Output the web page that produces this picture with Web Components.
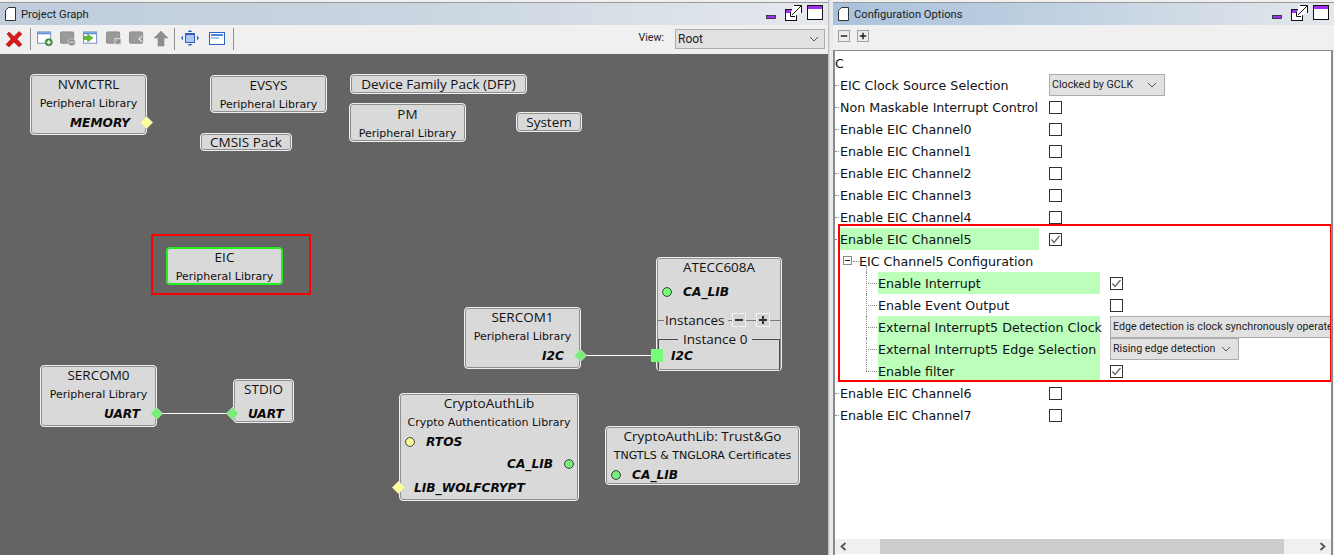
<!DOCTYPE html>
<html><head><meta charset="utf-8"><title>Project Graph</title>
<style>
html,body{margin:0;padding:0;width:1334px;height:555px;overflow:hidden;background:#f0f0f0;}
body{font-family:"Roboto","Liberation Sans",sans-serif;}
app-shell{--ui:"Roboto","Liberation Sans",sans-serif;--title:"Open Sans","Liberation Sans",sans-serif;--tree:"DejaVu Sans","Liberation Sans",sans-serif;}
</style></head><body>
<app-shell>
  <dock-panel slot="left" caption="Project Graph" grad="#bfcddb,#c9d5e0 50%,#e6e9ee">
    <tool-bar slot="tools" style="height:29px;padding-bottom:2px">
      <ui-icon name="close" style="margin-left:5px;width:18px;height:18px"></ui-icon>
      <tb-sep style="margin-left:7px"></tb-sep>
      <ui-icon name="add" style="margin-left:6px"></ui-icon>
      <ui-icon name="remove" style="margin-left:7px"></ui-icon>
      <ui-icon name="enter" style="margin-left:7px"></ui-icon>
      <ui-icon name="check" style="margin-left:7px"></ui-icon>
      <ui-icon name="back" style="margin-left:7px"></ui-icon>
      <ui-icon name="up" style="margin-left:8px"></ui-icon>
      <tb-sep style="margin-left:5px"></tb-sep>
      <ui-icon name="fit" style="margin-left:6px;width:18px"></ui-icon>
      <ui-icon name="win" style="margin-left:10px"></ui-icon>
      <tb-sep style="margin-left:8px"></tb-sep>
      <view-combo style="margin-left:auto"></view-combo>
    </tool-bar>
    <graph-canvas>
      <svg slot="wires" width="828" height="501" viewBox="0 54 828 501" style="position:absolute;left:0;top:0">
        <path d="M157 413.5H233M581 355.5H652" stroke="#fff" stroke-width="1" fill="none"/>
      </svg>
      <graph-node x="30" y="74" w="117" h="61" caption="NVMCTRL" sub="Peripheral Library">
        <graph-port side="right" place="edge" shape="diamond" color="#ffff99">MEMORY</graph-port>
      </graph-node>
      <graph-node x="210" y="75" w="117" h="38" caption="EVSYS" sub="Peripheral Library"></graph-node>
      <graph-node x="350" y="74" w="177" h="20" caption="Device Family Pack (DFP)" single></graph-node>
      <graph-node x="349" y="103" w="117" h="39" caption="PM" sub="Peripheral Library" style="padding-top:1px"></graph-node>
      <graph-node x="200" y="133" w="92" h="18" caption="CMSIS Pack" single></graph-node>
      <graph-node x="516" y="112" w="66" h="20" caption="System" single></graph-node>
      <graph-node x="166" y="247" w="117" h="38" caption="EIC" sub="Peripheral Library" selected></graph-node>
      <graph-node x="464" y="307" w="117" h="62" caption="SERCOM1" sub="Peripheral Library">
        <graph-port side="right" place="edge" shape="diamond" color="#77ee77">I2C</graph-port>
      </graph-node>
      <graph-node x="656" y="257" w="126" h="114" caption="ATECC608A">
        <graph-port side="left" place="inset" shape="circle" color="#77ff77" style="margin-top:5px">CA_LIB</graph-port>
        <instance-row style="margin-top:9px"></instance-row>
        <instance-frame caption="Instance 0" style="margin-top:9px">
          <graph-port side="left" place="square" shape="square" color="#77ff77">I2C</graph-port>
        </instance-frame>
      </graph-node>
      <graph-node x="40" y="365" w="117" h="62" caption="SERCOM0" sub="Peripheral Library">
        <graph-port side="right" place="edge" shape="diamond" color="#77ee77">UART</graph-port>
      </graph-node>
      <graph-node x="233" y="379" w="61" h="44" caption="STDIO">
        <graph-port side="left" place="edge" shape="diamond" color="#77ee77" style="margin-top:5px">UART</graph-port>
      </graph-node>
      <graph-node x="399" y="393" w="180" h="108" caption="CryptoAuthLib" sub="Crypto Authentication Library">
        <graph-port side="left" place="inset" shape="circle" color="#ffff99">RTOS</graph-port>
        <graph-port side="right" place="inset" shape="circle" color="#77ee77" style="margin-top:3px">CA_LIB</graph-port>
        <graph-port side="left" place="edge" shape="diamond" color="#ffff99" style="margin-top:5px">LIB_WOLFCRYPT</graph-port>
      </graph-node>
      <graph-node x="605" y="426" w="195" h="59" caption="CryptoAuthLib: Trust&amp;Go" sub="TNGTLS &amp; TNGLORA Certificates">
        <graph-port side="left" place="inset" shape="circle" color="#77ee77">CA_LIB</graph-port>
      </graph-node>
      <mark-box style="left:151px;top:180px;width:160px;height:61px"></mark-box>
    </graph-canvas>
  </dock-panel>
  <dock-panel slot="right" caption="Configuration Options" grad="#a9c2dc,#bdcfe0 40%,#e4e7ec">
    <tool-bar slot="tools" style="height:25px;padding-bottom:3px">
      <ui-icon name="minus" style="margin-left:5px;width:12px;height:12px"></ui-icon>
      <ui-icon name="plus" style="margin-left:7px;width:12px;height:12px"></ui-icon>
    </tool-bar>
    <prop-pane>
      <prop-row level="root" label="C"></prop-row>
      <prop-row label="EIC Clock Source Selection"><prop-combo style="width:116px">Clocked by GCLK</prop-combo></prop-row>
      <prop-row label="Non Maskable Interrupt Control"><prop-check></prop-check></prop-row>
      <prop-row label="Enable EIC Channel0"><prop-check></prop-check></prop-row>
      <prop-row label="Enable EIC Channel1"><prop-check></prop-check></prop-row>
      <prop-row label="Enable EIC Channel2"><prop-check></prop-check></prop-row>
      <prop-row label="Enable EIC Channel3"><prop-check></prop-check></prop-row>
      <prop-row label="Enable EIC Channel4"><prop-check></prop-check></prop-row>
      <prop-row label="Enable EIC Channel5" hl><prop-check checked></prop-check></prop-row>
      <prop-row level="1" label="EIC Channel5 Configuration"></prop-row>
      <prop-row level="2" label="Enable Interrupt" hl><prop-check checked></prop-check></prop-row>
      <prop-row level="2" label="Enable Event Output"><prop-check></prop-check></prop-row>
      <prop-row level="2" label="External Interrupt5 Detection Clock" hl><prop-combo style="width:300px">Edge detection is clock synchronously operated</prop-combo></prop-row>
      <prop-row level="2" label="External Interrupt5 Edge Selection" hl><prop-combo style="width:129px">Rising edge detection</prop-combo></prop-row>
      <prop-row level="2" last label="Enable filter" hl><prop-check checked></prop-check></prop-row>
      <prop-row label="Enable EIC Channel6"><prop-check></prop-check></prop-row>
      <prop-row label="Enable EIC Channel7"><prop-check></prop-check></prop-row>
      <mark-box style="left:3px;top:173px;width:494px;height:158px"></mark-box>
    </prop-pane>
  </dock-panel>
</app-shell>
<script>
function def(name, css, html, init){
  customElements.define(name, class extends HTMLElement{
    connectedCallback(){
      if(this.shadowRoot) return;
      const r=this.attachShadow({mode:'open'});
      r.innerHTML='<style>'+css+'</style>'+(typeof html==='function'?html(this):html);
      if(init) init(this,r);
    }
  });
}
const a=(e,n,d='')=>e.hasAttribute(n)?e.getAttribute(n):d;
const esc=s=>s.replace(/&/g,'&amp;').replace(/</g,'&lt;');

def('app-shell',`:host{display:flex;width:1334px;height:555px}
 .l{width:828px;flex:none;display:flex}
 .s{width:5px;flex:none;background:linear-gradient(90deg,#b0b0b0,#ececec 40%,#e8e8e8)}
 .r{flex:1;display:flex;min-width:0}
 ::slotted(*){flex:1;min-width:0}`,
 `<div class="l"><slot name="left"></slot></div><div class="s"></div><div class="r"><slot name="right"></slot></div>`);

const winIcons=`
<svg width="57" height="16" viewBox="0 0 57 16">
 <rect x=".5" y="10.5" width="9" height="3" fill="#a030f0" stroke="#222" stroke-width=".8"/>
 <g transform="translate(19,0)"><rect x=".5" y="4.5" width="11" height="11" fill="#fff" stroke="#111"/><rect x="1" y="5" width="10" height="3" fill="#a030f0"/>
 <path d="M8.5 .5H16.5V7L8 12.5L5 9.5Z" fill="#fff"/><path d="M9 .5H16.5V8M16 1L7 10M5.5 7V11.5H10" fill="none" stroke="#111"/></g>
 <g transform="translate(41,0)"><rect x=".5" y=".5" width="15" height="14" fill="#fff" stroke="#111"/><rect x="1" y="1" width="14" height="3" fill="#a030f0"/></g>
</svg>`;

def('dock-panel',`:host{display:flex;flex-direction:column;height:555px;box-sizing:border-box;padding-top:2px;min-width:0}
 .t{height:23px;flex:none;border-top:1px solid #9a9a9a;box-sizing:border-box;display:flex;align-items:center;padding:0 5px 0 5px;font:11.2px/1 var(--ui);color:#1c1c1c}
 .t svg.p{margin-right:5px;flex:none}
 .t span{flex:1;padding-top:2px}
 .t .w{flex:none;display:block;height:16px;margin-top:-2px}
 .c{flex:1;min-height:0;display:flex;flex-direction:column;position:relative}`,
 e=>`<div class="t" style="background:linear-gradient(90deg,${a(e,'grad')})">
 <svg class="p" width="11" height="14" viewBox="0 0 11 14"><path d="M3.5.5H10.5V13.5H.5V3.5Z" fill="#fff" stroke="#333"/></svg>
 <span>${esc(a(e,'caption'))}</span><div class="w">${winIcons}</div></div>
 <slot name="tools"></slot><div class="c"><slot></slot></div>`);

def('tool-bar',`:host{display:flex;align-items:center;flex:none;background:#f0f0f0;box-sizing:border-box}`,`<slot></slot>`);
def('tb-sep',`:host{display:block;width:1px;height:22px;background:#8e8e8e;flex:none}`,``);

const icons={
 close:`<svg viewBox="0 0 18 18"><path d="M2 4L4 2L9 6.5L14 1.5L17 4L12 9L17 14.5L14 17L9 12L4 17L1 14.5L6 9Z" fill="#d9191c" stroke="#a82020" stroke-width=".6"/></svg>`,
 add:`<svg viewBox="0 0 17 17"><rect x=".5" y="1.5" width="14" height="12" fill="#fff" stroke="#6f8fc0"/><rect x="1" y="2" width="13" height="2" fill="#5b8fd8"/><circle cx="12.5" cy="12.5" r="3.8" fill="#4a9a3a" stroke="#2c6b24" stroke-width=".6"/><path d="M12.5 10.3V14.7M10.3 12.5H14.7" stroke="#fff" stroke-width="1.3"/></svg>`,
 remove:`<svg viewBox="0 0 17 17"><rect x=".5" y="1.5" width="14" height="12" rx="1" fill="#9a9a9a" stroke="#8a8a8a"/><circle cx="12.5" cy="12.5" r="3.8" fill="#8c8c8c" stroke="#eee" stroke-width=".6"/><path d="M10.3 12.5H14.7" stroke="#ddd" stroke-width="1.3"/></svg>`,
 enter:`<svg viewBox="0 0 17 17"><rect x=".5" y="1.5" width="14" height="12" fill="#fff" stroke="#6f8fc0"/><rect x="1" y="2" width="13" height="2" fill="#5b8fd8"/><path d="M1 6.5H5V4L10.5 8L5 12V9.5H1Z" fill="#5fc030" stroke="#3c8c20" stroke-width=".6"/></svg>`,
 check:`<svg viewBox="0 0 17 17"><rect x=".5" y="1.5" width="14" height="12" rx="1" fill="#9a9a9a" stroke="#8a8a8a"/><rect x="9.5" y="8.5" width="6.5" height="6.5" fill="#a8a8a8" stroke="#eee" stroke-width=".7"/><path d="M10.8 11.5L12.3 13.2L14.8 10" fill="none" stroke="#666"/></svg>`,
 back:`<svg viewBox="0 0 17 17"><rect x=".5" y="1.5" width="14" height="12" rx="1" fill="#9a9a9a" stroke="#8a8a8a"/><path d="M14 6L10.5 9L14 12" fill="none" stroke="#e6e6e6" stroke-width="1.2"/></svg>`,
 up:`<svg viewBox="0 0 16 17"><path d="M8 1L15 8H11V16H5V8H1Z" fill="#8e8e8e" stroke="#858585" stroke-width=".5"/></svg>`,
 fit:`<svg viewBox="0 0 18 17"><rect x="4.5" y="3.5" width="9" height="9" fill="#a9c8f2" stroke="#2c5fc0"/><path d="M5 4.5H13" stroke="#2c5fc0"/><path d="M9 0L11.5 2H6.5ZM9 16L11.5 14H6.5ZM0 8L2 5.5V10.5ZM18 8L16 5.5V10.5Z" fill="#2c5fc0"/></svg>`,
 win:`<svg viewBox="0 0 16 17"><rect x=".5" y="2.5" width="15" height="12" fill="#fff" stroke="#2f62c4"/><rect x="2" y="4" width="12" height="2" fill="#4a82e0"/><rect x="2" y="7" width="8" height="2" fill="#a8c8f4"/></svg>`,
 minus:`<svg viewBox="0 0 13 13"><rect x=".5" y=".5" width="12" height="12" fill="#ececec" stroke="#9a9a9a"/><path d="M3 6.5H10" stroke="#222" stroke-width="1.6"/></svg>`,
 plus:`<svg viewBox="0 0 13 13"><rect x=".5" y=".5" width="12" height="12" fill="#ececec" stroke="#9a9a9a"/><path d="M3 6.5H10M6.5 3V10" stroke="#222" stroke-width="1.6"/></svg>`
};
def('ui-icon',`:host{display:block;width:16px;height:17px;flex:none} svg{display:block;width:100%;height:100%}`,e=>icons[a(e,'name')]||'');

def('view-combo',`:host{display:flex;align-items:center;margin-right:3px;font:10.6px/1 var(--ui);color:#222}
 .b{margin-left:11px;width:150px;height:20px;box-sizing:border-box;background:#e1e1e1;border:1px solid #adadad;display:flex;align-items:center;padding:0 5px 0 2px;font-size:12px}
 .b span{flex:1} svg{flex:none}`,
 `View:<div class="b"><span>Root</span><svg width="10" height="6" viewBox="0 0 10 6"><path d="M1 1L5 5L9 1" fill="none" stroke="#555"/></svg></div>`);

def('graph-canvas',`:host{display:block;position:relative;flex:1;background:#646464;overflow:hidden}`,`<slot name="wires"></slot><slot></slot>`);

def('graph-node',`:host{position:absolute;box-sizing:border-box;display:flex;flex-direction:column;background:#d9d9d9;border:1px solid #efefef;border-radius:4px;box-shadow:inset 0 0 0 1px #8f8f8f;color:#111}
 :host([selected]){border:1px solid #22ee22;box-shadow:inset 0 0 0 1px #22ee22}
 :host([single]){justify-content:center}
 .n{height:19px;text-align:center;font:13.5px/19px var(--title);white-space:nowrap;flex:none}
 .s{height:19px;text-align:center;font:11px/20px var(--tree);white-space:nowrap;flex:none}`,
 e=>`<div class="n">${esc(a(e,'caption'))}</div>${e.hasAttribute('sub')?`<div class="s">${esc(a(e,'sub'))}</div>`:''}<slot></slot>`,
 (e)=>{const s=e.style;s.left=a(e,'x')+'px';s.top=(+a(e,'y')-54)+'px';s.width=a(e,'w')+'px';s.height=a(e,'h')+'px';});

def('graph-port',`:host{display:flex;position:relative;height:19px;align-items:flex-start;flex:none;font:italic bold 12.2px/20px var(--tree);color:#0a0a0a;white-space:nowrap}
 :host([side=right]){justify-content:flex-end}
 :host([place=edge][side=left]){padding-left:14px}
 :host([place=edge][side=right]){padding-right:16px}
 :host([place=inset][side=left]){padding-left:26px}
 :host([place=inset][side=right]){padding-right:25px}
 :host([place=square]){padding-left:12px}
 svg{position:absolute;top:50%;overflow:visible}
 :host([place=edge][side=left]) svg{left:-8px;margin-top:-7px}
 :host([place=edge][side=right]) svg{right:-7px;margin-top:-7px}
 :host([place=inset][side=left]) svg{left:5px;margin-top:-5px}
 :host([place=inset][side=right]) svg{right:4px;margin-top:-5px}
 :host([place=square]) svg{left:-8px;margin-top:-7px}`,
 e=>{const c=a(e,'color'),sh=a(e,'shape');
  const m= sh==='diamond'?`<svg width="13" height="13" viewBox="0 0 13 13"><path d="M6.5 .3L12.7 6.5L6.5 12.7L.3 6.5Z" fill="${c}" stroke="#dcdcdc" stroke-width=".7"/></svg>`
   : sh==='circle'?`<svg width="10" height="10" viewBox="0 0 10 10"><circle cx="5" cy="5" r="4.4" fill="${c}" stroke="#2c2c2c" stroke-width=".9"/></svg>`
   : `<svg width="12" height="13" viewBox="0 0 12 13"><rect width="12" height="13" fill="${c}"/></svg>`;
  return m+'<slot></slot>';});

def('instance-row',`:host{display:flex;align-items:center;height:20px;position:relative;font:13.5px/20px var(--title);color:#111;flex:none}
 .l{height:1px;background:#7a7a7a;flex:none}
 .t{padding:0 3px 0 1px}
 .b{width:14px;height:14px;box-sizing:border-box;border:1px solid #f2f2f2;background:#d4d4d4;flex:none;display:block;outline:0}
 svg{display:block}`,
 `<div class="l" style="width:7px"></div><div class="t">Instances</div><div class="l" style="width:4px"></div>
 <div class="b"><svg width="12" height="12"><path d="M2 6H10" stroke="#333" stroke-width="2"/></svg></div><div class="l" style="width:10px"></div>
 <div class="b"><svg width="12" height="12"><path d="M2 6H10M6 2V10" stroke="#333" stroke-width="2"/></svg></div><div class="l" style="flex:1"></div>`);

def('instance-frame',`:host{display:block;position:relative;box-sizing:border-box;margin:0 1px;height:31px;border:1px solid #4a4a4a;border-bottom:0;padding-top:6px;flex:none}
 .c{position:absolute;left:19px;top:-10px;padding:0 5px;background:#d9d9d9;font:13.5px/18px var(--title);color:#111;white-space:nowrap}`,
 e=>`<div class="c">${esc(a(e,'caption'))}</div><slot></slot>`);

def('mark-box',`:host{position:absolute;box-sizing:border-box;border:2px solid #f00;pointer-events:none;display:block}`,``);

def('prop-pane',`:host{display:block;position:relative;flex:1;background:#fff;border:solid #888c90;border-width:1px 2px 0 2px;margin-right:1px;overflow:hidden}
 .rows{display:block;height:488px;overflow:hidden;position:relative;padding-top:1px;box-sizing:border-box}
 .bar{position:absolute;left:0;right:0;top:488px;height:15px;background:#f0f0f0;display:flex;align-items:center}
 .th{position:absolute;left:45px;width:404px;top:0;height:15px;background:#cdcdcd}
 svg{position:absolute;top:3px}`,
 `<div class="rows"><slot></slot></div><div class="bar"><svg style="left:5px" width="7" height="9" viewBox="0 0 7 9"><path d="M5.5 1L1.5 4.5L5.5 8" fill="none" stroke="#555" stroke-width="1.8"/></svg><div class="th"></div><svg style="right:5px" width="7" height="9" viewBox="0 0 7 9"><path d="M1.5 1L5.5 4.5L1.5 8" fill="none" stroke="#555" stroke-width="1.8"/></svg></div>`);

def('prop-row',`:host{display:flex;height:22px;align-items:center;position:relative;font:12.65px/24px var(--tree);color:#111;white-space:nowrap;--dot:#8a8a8a}
 .lab{height:22px;flex:none;box-sizing:border-box;margin-left:5px;width:199px}
 .hl{background:#bbffbb}
 .ctl{margin-left:10px;display:flex;align-items:center;flex:none}
 .h,.v,.tg{position:absolute}
 .h{height:0;border-top:1px dotted var(--dot);top:11px}
 .v{width:0;border-left:1px dotted var(--dot)}
 :host([level=root]) .lab{margin-left:0;width:auto}
 :host([level="1"]) .lab{margin-left:24px;width:auto}
 :host([level="2"]) .lab{margin-left:43px;width:222px}
 .tg{left:8px;top:6px;width:9px;height:9px;background:#fff}
 .tg svg{display:block}`,
 e=>{const lv=a(e,'level','0');let t='';
  if(lv==='0') t=`<i class="h" style="left:0;width:4px"></i>`;
  if(lv==='1') t=`<i class="h" style="left:18px;width:6px"></i><span class="tg"><svg width="9" height="9"><rect x=".5" y=".5" width="8" height="8" fill="#fff" stroke="#8a8a8a"/><path d="M2 4.5H7" stroke="#222"/></svg></span><i class="v" style="left:31px;top:16px;height:6px"></i>`;
  if(lv==='2') t=`<i class="h" style="left:31px;width:11px"></i><i class="v" style="left:31px;top:0;height:${e.hasAttribute('last')?11:22}px"></i>`;
  return t+`<div class="lab ${e.hasAttribute('hl')?'hl':''}">${esc(a(e,'label'))}</div>`+(lv==='root'||lv==='1'?'':`<div class="ctl"><slot></slot></div>`);});

def('prop-check',`:host{display:block;width:13px;height:13px;flex:none} svg{display:block}`,
 e=>`<svg width="13" height="13" viewBox="0 0 13 13"><rect x=".5" y=".5" width="12" height="12" fill="#fff" stroke="#333"/>${e.hasAttribute('checked')?'<path d="M2.5 6.5L5 9.5L10.5 3" fill="none" stroke="#666" stroke-width="1.3"/>':''}</svg>`);

def('prop-combo',`:host{display:flex;align-items:center;height:22px;box-sizing:border-box;background:#e1e1e1;border:1px solid #adadad;padding:0 7px 0 2px;font:10.7px/20px var(--ui);color:#222;flex:none;overflow:hidden}
 span{flex:1;white-space:nowrap;overflow:hidden} svg{flex:none;margin-left:6px}`,
 `<span><slot></slot></span><svg width="10" height="6" viewBox="0 0 10 6"><path d="M1 1L5 5L9 1" fill="none" stroke="#555"/></svg>`);
</script>
</body></html>
